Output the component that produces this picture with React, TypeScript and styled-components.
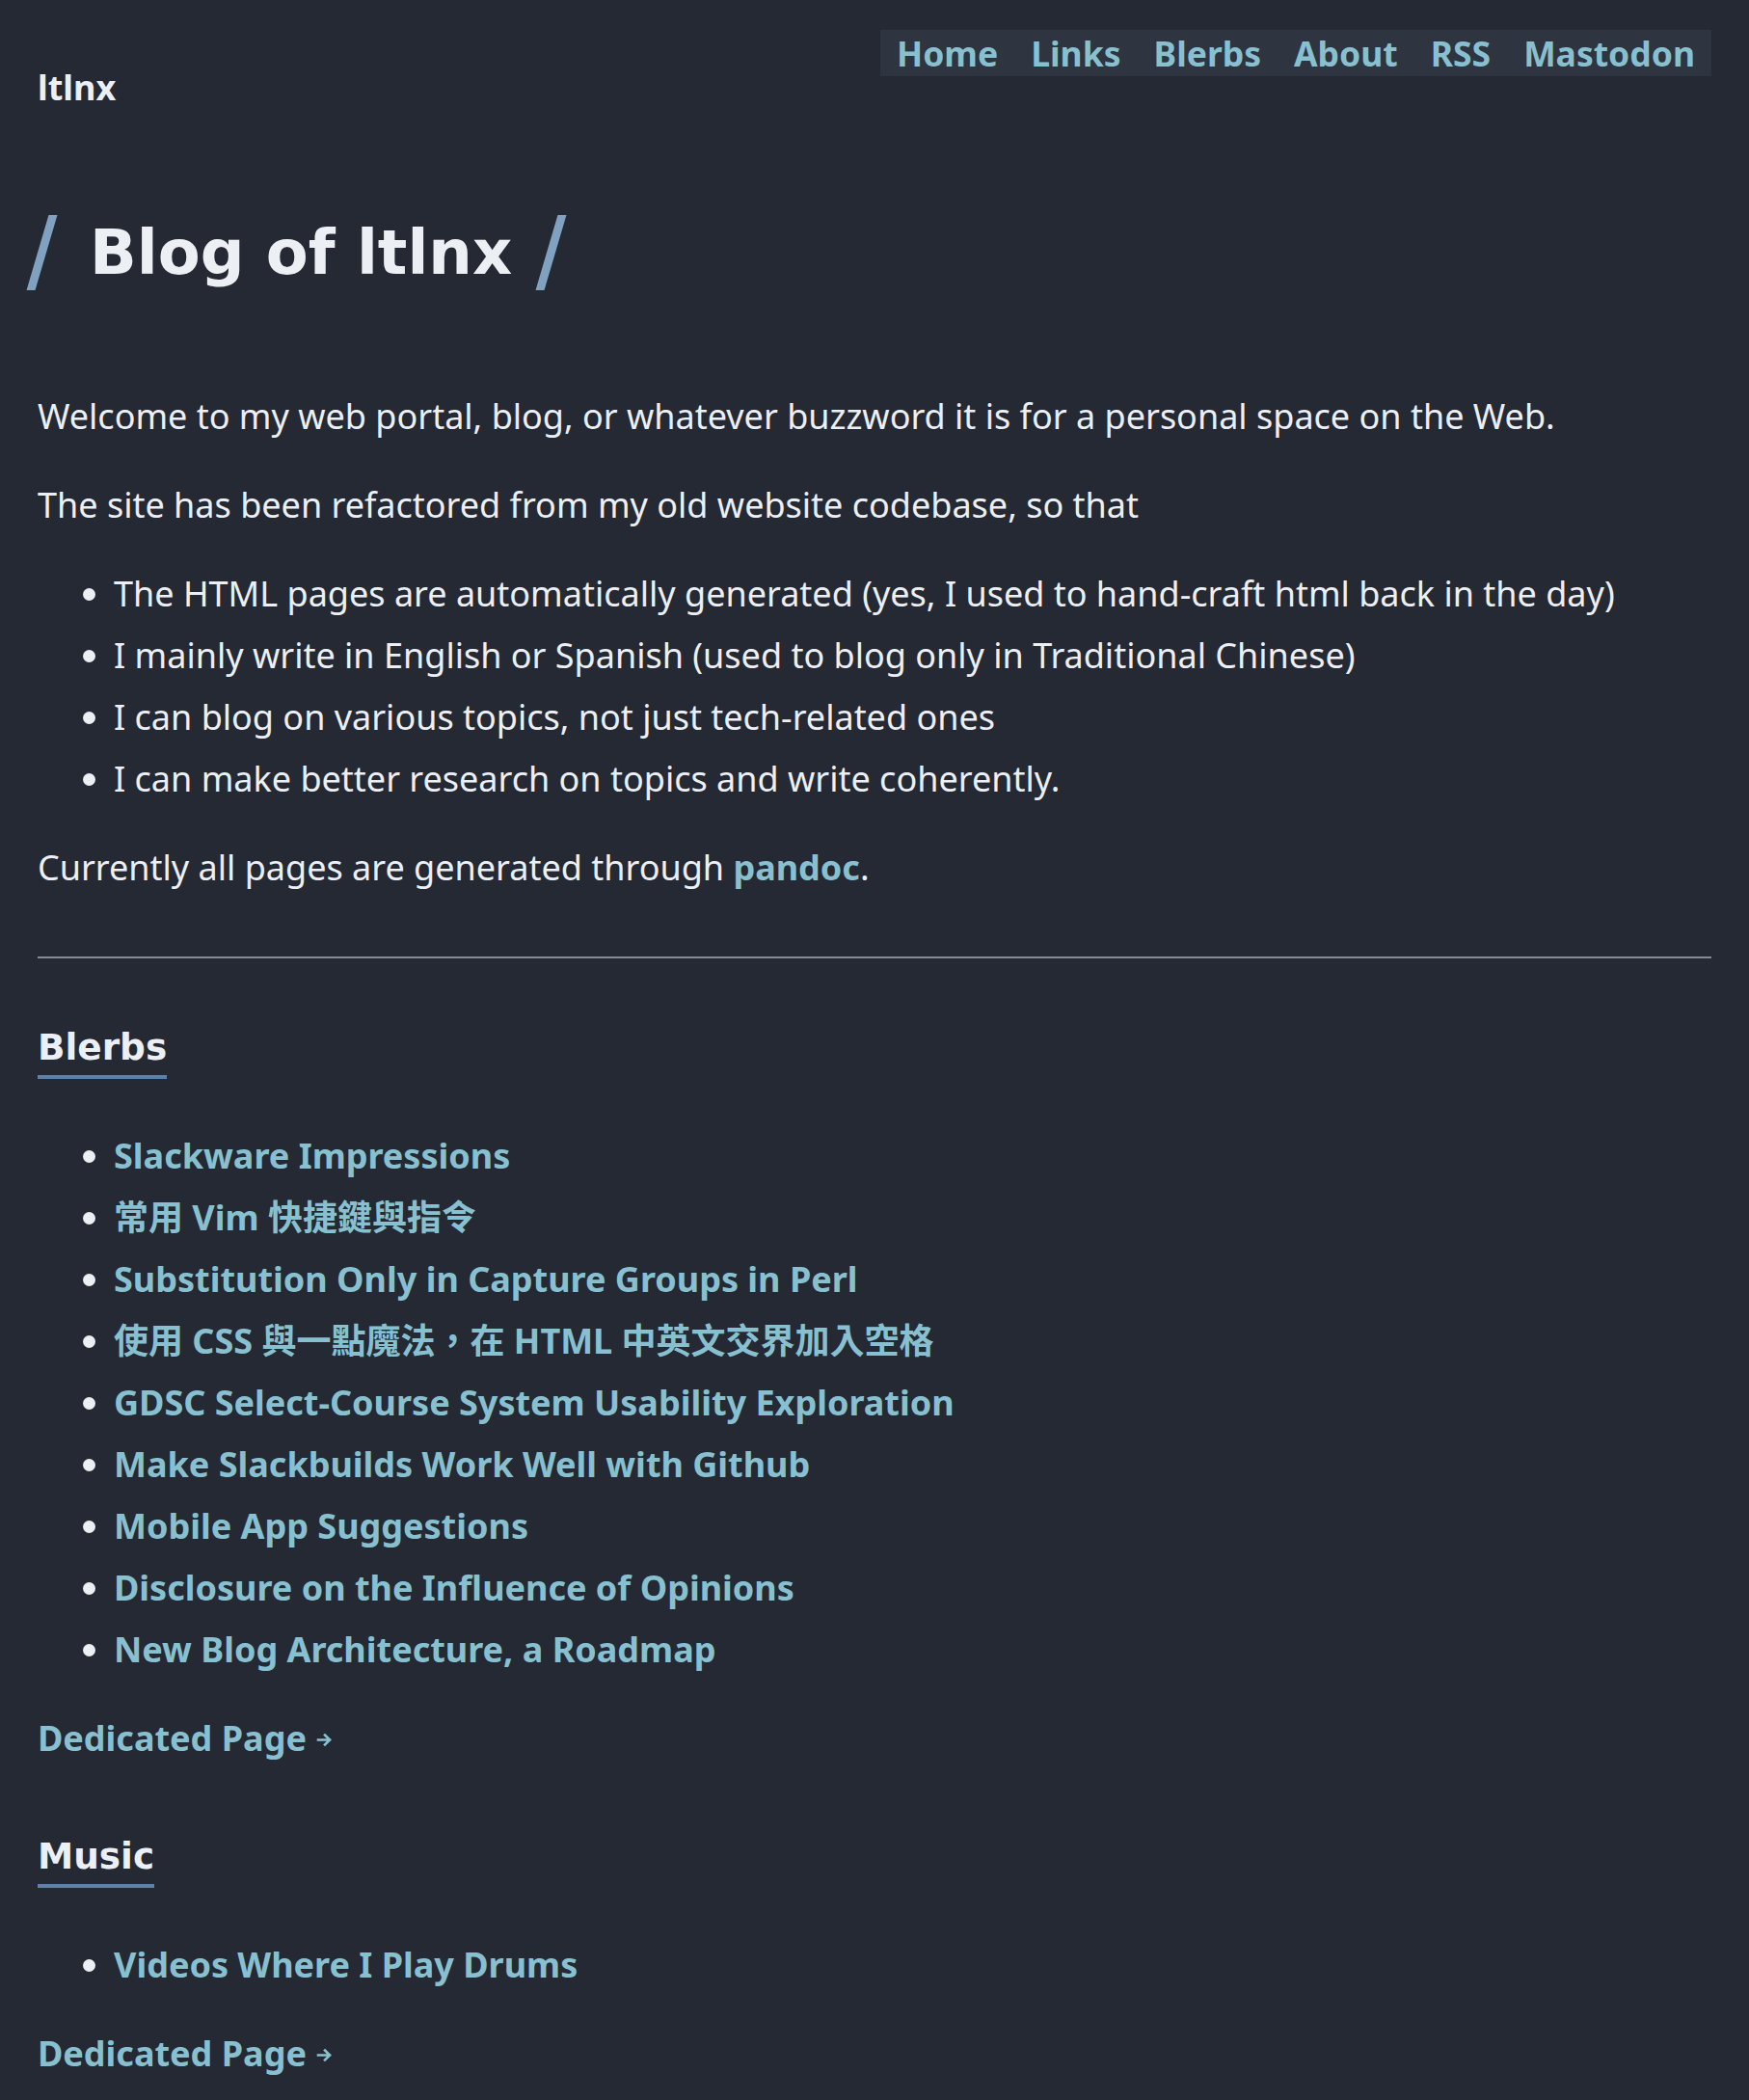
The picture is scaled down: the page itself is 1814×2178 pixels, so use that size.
import React from "react";
import styled, { createGlobalStyle } from "styled-components";

const GlobalStyle = createGlobalStyle`
  html, body {
    margin: 0;
    padding: 0;
    background: #242933;
  }
  body {
    color: #eceff4;
    font-family: "Noto Sans", "Noto Sans CJK TC", sans-serif;
    font-size: 36px;
    line-height: 64px;
  }
`;

const Page = styled.div`
  padding: 31px 39px 20px;
  min-height: 2178px;
  box-sizing: border-box;
`;

const Header = styled.header`
  display: flex;
  justify-content: space-between;
  align-items: flex-start;
`;

const SiteName = styled.a`
  margin-top: 36px;
  font-size: 36px;
  line-height: 48px;
  font-weight: 700;
  color: #eceff4;
  text-decoration: none;
`;

const Nav = styled.nav`
  display: flex;
  background: #2e3440;
  height: 48px;
`;

const NavLink = styled.a`
  padding: 0 17px;
  font-size: 35.5px;
  line-height: 48px;
  font-weight: 700;
  color: #88c0d0;
  text-decoration: none;
`;

const Title = styled.h1`
  display: flex;
  align-items: stretch;
  margin: 108px 0 0;
  height: 78px;
`;

const Slash = styled.span<{ $gap: number }>`
  display: block;
  width: 9px;
  background: #81a1c1;
  transform: skewX(-16.4deg);
  margin: 0 ${(p) => p.$gap}px;
  &:first-child {
    margin-left: 0;
  }
  &:last-child {
    margin-right: 0;
  }
`;

const TitleText = styled.span`
  font-family: "DejaVu Sans", sans-serif;
  font-weight: 700;
  font-size: 64px;
  line-height: 78px;
  color: #eceff4;
`;

const Para = styled.p<{ $top?: number }>`
  margin: ${(p) => p.$top ?? 28}px 0 0;
`;

const Bullets = styled.ul<{ $top?: number }>`
  margin: ${(p) => p.$top ?? 28}px 0 0;
  padding-left: 79px;
  list-style: disc;
`;

const Item = styled.li`
  color: #eceff4;
`;

const Link = styled.a`
  color: #88c0d0;
  font-weight: 700;
  text-decoration: none;
`;

const Rule = styled.hr`
  margin: 60px 0 0;
  border: 0;
  height: 2px;
  background: #858a94;
`;

const Section = styled.section<{ $top: number }>`
  margin-top: ${(p) => p.$top}px;
`;

const Heading = styled.h2`
  display: inline-block;
  margin: 0;
  padding-bottom: 7px;
  border-bottom: 4px solid #5e81ac;
  font-family: "DejaVu Sans", sans-serif;
  font-weight: 700;
  font-size: 37.4px;
  line-height: 43px;
  color: #eceff4;
`;

const MoreLink = styled.a`
  display: block;
  margin-top: 28px;
  color: #88c0d0;
  font-weight: 700;
  text-decoration: none;
`;

const Arrow = styled.svg`
  width: 17px;
  height: 15px;
  margin-left: 10px;
  vertical-align: 4px;
`;

const ArrowIcon = () => (
  <Arrow viewBox="0 0 17 15" fill="none" stroke="#88c0d0" strokeWidth="2.6" strokeLinecap="square">
    <path d="M2 7.5h12M9 2.5l5 5-5 5" />
  </Arrow>
);

const navItems = ["Home", "Links", "Blerbs", "About", "RSS", "Mastodon"];

const blerbs = [
  "Slackware Impressions",
  "常用 Vim 快捷鍵與指令",
  "Substitution Only in Capture Groups in Perl",
  "使用 CSS 與一點魔法，在 HTML 中英文交界加入空格",
  "GDSC Select-Course System Usability Exploration",
  "Make Slackbuilds Work Well with Github",
  "Mobile App Suggestions",
  "Disclosure on the Influence of Opinions",
  "New Blog Architecture, a Roadmap",
];

const music = ["Videos Where I Play Drums"];

const PostList = ({ title, posts, top }: { title: string; posts: string[]; top: number }) => (
  <Section $top={top}>
    <Heading>{title}</Heading>
    <Bullets $top={48}>
      {posts.map((p) => (
        <Item key={p}>
          <Link href="#">{p}</Link>
        </Item>
      ))}
    </Bullets>
    <MoreLink href="#">
      Dedicated Page
      <ArrowIcon />
    </MoreLink>
  </Section>
);

export default function App() {
  return (
    <>
      <GlobalStyle />
      <Page>
        <Header>
          <SiteName href="#">ltlnx</SiteName>
          <Nav>
            {navItems.map((n) => (
              <NavLink key={n} href="#">
                {n}
              </NavLink>
            ))}
          </Nav>
        </Header>

        <Title>
          <Slash $gap={45} />
          <TitleText>Blog of ltlnx</TitleText>
          <Slash $gap={36} />
        </Title>

        <Para $top={99}>
          Welcome to my web portal, blog, or whatever buzzword it is for a personal space on the Web.
        </Para>
        <Para>The site has been refactored from my old website codebase, so that</Para>
        <Bullets>
          <Item>The HTML pages are automatically generated (yes, I used to hand-craft html back in the day)</Item>
          <Item>I mainly write in English or Spanish (used to blog only in Traditional Chinese)</Item>
          <Item>I can blog on various topics, not just tech-related ones</Item>
          <Item>I can make better research on topics and write coherently.</Item>
        </Bullets>
        <Para>
          Currently all pages are generated through <Link href="#">pandoc</Link>.
        </Para>

        <Rule />

        <PostList title="Blerbs" posts={blerbs} top={60} />
        <PostList title="Music" posts={music} top={58} />
      </Page>
    </>
  );
}
